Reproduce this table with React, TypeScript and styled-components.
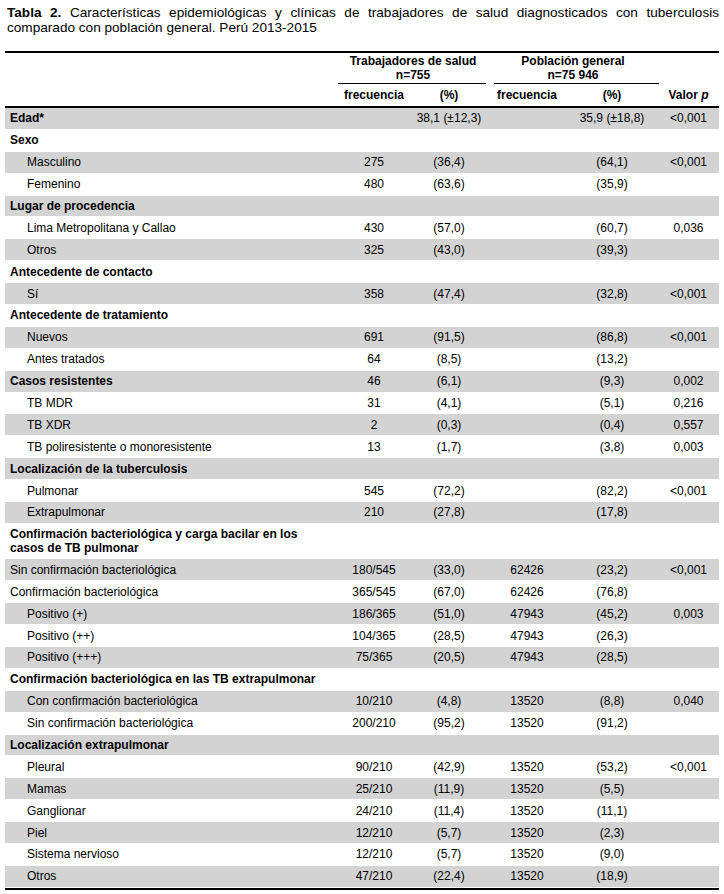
import React from "react";
import styled, { createGlobalStyle } from "styled-components";

const GlobalStyle = createGlobalStyle`
  body {
    margin: 0;
    background: #fff;
    color: #000;
    font-family: "Liberation Sans", Arial, sans-serif;
  }
`;

const COLS = "333px 72px 78px 78px 92px 61px";
const SHADE = "#d3d3d3";

const Page = styled.div`
  width: 724px;
  box-sizing: border-box;
  padding: 5px 5px 0 5px;
`;

const Caption = styled.p`
  margin: 0 0 16px 2px;
  font-size: 13.6px;
  line-height: 15px;
  text-align: justify;

  & b {
    font-weight: 700;
  }
`;

const Table = styled.div`
  border-top: 2px solid #000;
  border-bottom: 2px solid #000;
  font-size: 12px;
`;

const HeadTop = styled.div`
  display: grid;
  grid-template-columns: ${COLS};
  height: 31px;
`;

const GroupCell = styled.div<{ $inset: string }>`
  grid-column: span 2;
  display: flex;
  flex-direction: column;
  padding-top: 1px;
  font-weight: 700;
  line-height: 14px;
  text-align: center;

  & .rule {
    margin: 1px ${(p) => p.$inset};
    border-top: 1px solid #000;
  }
`;

const HeadBottom = styled.div`
  display: grid;
  grid-template-columns: ${COLS};
  height: 22px;
  line-height: 22px;
  font-weight: 700;
  text-align: center;
  border-bottom: 2px solid #000;

  & i {
    font-style: italic;
  }
`;

const Row = styled.div<{ $shade: boolean; $tall?: boolean }>`
  display: grid;
  grid-template-columns: ${COLS};
  box-sizing: border-box;
  height: ${(p) => (p.$tall ? "35.5px" : "21.9px")};
  background: ${(p) => (p.$shade ? SHADE : "#fff")};
  border-bottom: 1px solid #fff;
`;

const LabelCell = styled.div<{ $indent?: boolean; $bold?: boolean }>`
  display: flex;
  align-items: center;
  padding-left: ${(p) => (p.$indent ? "22px" : "5px")};
  padding-right: 6px;
  font-weight: ${(p) => (p.$bold ? 700 : 400)};
  line-height: 14px;
`;

const DataCell = styled.div`
  display: flex;
  align-items: center;
  justify-content: center;
  white-space: nowrap;
`;

type Line = {
  label: string;
  indent?: boolean;
  bold?: boolean;
  tall?: boolean;
  v?: string[];
};

const rows: Line[] = [
  { label: "Edad*", bold: true, v: ["", "38,1 (±12,3)", "", "35,9 (±18,8)", "<0,001"] },
  { label: "Sexo", bold: true },
  { label: "Masculino", indent: true, v: ["275", "(36,4)", "", "(64,1)", "<0,001"] },
  { label: "Femenino", indent: true, v: ["480", "(63,6)", "", "(35,9)", ""] },
  { label: "Lugar de procedencia", bold: true },
  { label: "Lima Metropolitana y Callao", indent: true, v: ["430", "(57,0)", "", "(60,7)", "0,036"] },
  { label: "Otros", indent: true, v: ["325", "(43,0)", "", "(39,3)", ""] },
  { label: "Antecedente de contacto", bold: true },
  { label: "Sí", indent: true, v: ["358", "(47,4)", "", "(32,8)", "<0,001"] },
  { label: "Antecedente de tratamiento", bold: true },
  { label: "Nuevos", indent: true, v: ["691", "(91,5)", "", "(86,8)", "<0,001"] },
  { label: "Antes tratados", indent: true, v: ["64", "(8,5)", "", "(13,2)", ""] },
  { label: "Casos resistentes", bold: true, v: ["46", "(6,1)", "", "(9,3)", "0,002"] },
  { label: "TB MDR", indent: true, v: ["31", "(4,1)", "", "(5,1)", "0,216"] },
  { label: "TB XDR", indent: true, v: ["2", "(0,3)", "", "(0,4)", "0,557"] },
  { label: "TB poliresistente o monoresistente", indent: true, v: ["13", "(1,7)", "", "(3,8)", "0,003"] },
  { label: "Localización de la tuberculosis", bold: true },
  { label: "Pulmonar", indent: true, v: ["545", "(72,2)", "", "(82,2)", "<0,001"] },
  { label: "Extrapulmonar", indent: true, v: ["210", "(27,8)", "", "(17,8)", ""] },
  { label: "Confirmación bacteriológica y carga bacilar en los casos de TB pulmonar", bold: true, tall: true },
  { label: "Sin confirmación bacteriológica", v: ["180/545", "(33,0)", "62426", "(23,2)", "<0,001"] },
  { label: "Confirmación bacteriológica", v: ["365/545", "(67,0)", "62426", "(76,8)", ""] },
  { label: "Positivo (+)", indent: true, v: ["186/365", "(51,0)", "47943", "(45,2)", "0,003"] },
  { label: "Positivo (++)", indent: true, v: ["104/365", "(28,5)", "47943", "(26,3)", ""] },
  { label: "Positivo (+++)", indent: true, v: ["75/365", "(20,5)", "47943", "(28,5)", ""] },
  { label: "Confirmación bacteriológica en las TB extrapulmonar", bold: true },
  { label: "Con confirmación bacteriológica", indent: true, v: ["10/210", "(4,8)", "13520", "(8,8)", "0,040"] },
  { label: "Sin confirmación bacteriológica", indent: true, v: ["200/210", "(95,2)", "13520", "(91,2)", ""] },
  { label: "Localización extrapulmonar", bold: true },
  { label: "Pleural", indent: true, v: ["90/210", "(42,9)", "13520", "(53,2)", "<0,001"] },
  { label: "Mamas", indent: true, v: ["25/210", "(11,9)", "13520", "(5,5)", ""] },
  { label: "Ganglionar", indent: true, v: ["24/210", "(11,4)", "13520", "(11,1)", ""] },
  { label: "Piel", indent: true, v: ["12/210", "(5,7)", "13520", "(2,3)", ""] },
  { label: "Sistema nervioso", indent: true, v: ["12/210", "(5,7)", "13520", "(9,0)", ""] },
  { label: "Otros", indent: true, v: ["47/210", "(22,4)", "13520", "(18,9)", ""] },
];

export default function App() {
  return (
    <Page>
      <GlobalStyle />
      <Caption>
        <b>Tabla 2.</b> Características epidemiológicas y clínicas de trabajadores de salud
        diagnosticados con tuberculosis comparado con población general. Perú 2013-2015
      </Caption>
      <Table>
        <HeadTop>
          <div />
          <GroupCell $inset="2px 0 0">
            <span>Trabajadores de salud</span>
            <span>n=755</span>
            <div className="rule" />
          </GroupCell>
          <GroupCell $inset="-1px 0 6px">
            <span>Población general</span>
            <span>n=75 946</span>
            <div className="rule" />
          </GroupCell>
          <div />
        </HeadTop>
        <HeadBottom>
          <div />
          <div>frecuencia</div>
          <div>(%)</div>
          <div>frecuencia</div>
          <div>(%)</div>
          <div>
            Valor <i>p</i>
          </div>
        </HeadBottom>
        {rows.map((r, i) => (
          <Row key={i} $shade={i % 2 === 0} $tall={r.tall}>
            <LabelCell $indent={r.indent} $bold={r.bold}>
              {r.label}
            </LabelCell>
            {(r.v ?? ["", "", "", "", ""]).map((val, j) => (
              <DataCell key={j}>{val}</DataCell>
            ))}
          </Row>
        ))}
      </Table>
    </Page>
  );
}
